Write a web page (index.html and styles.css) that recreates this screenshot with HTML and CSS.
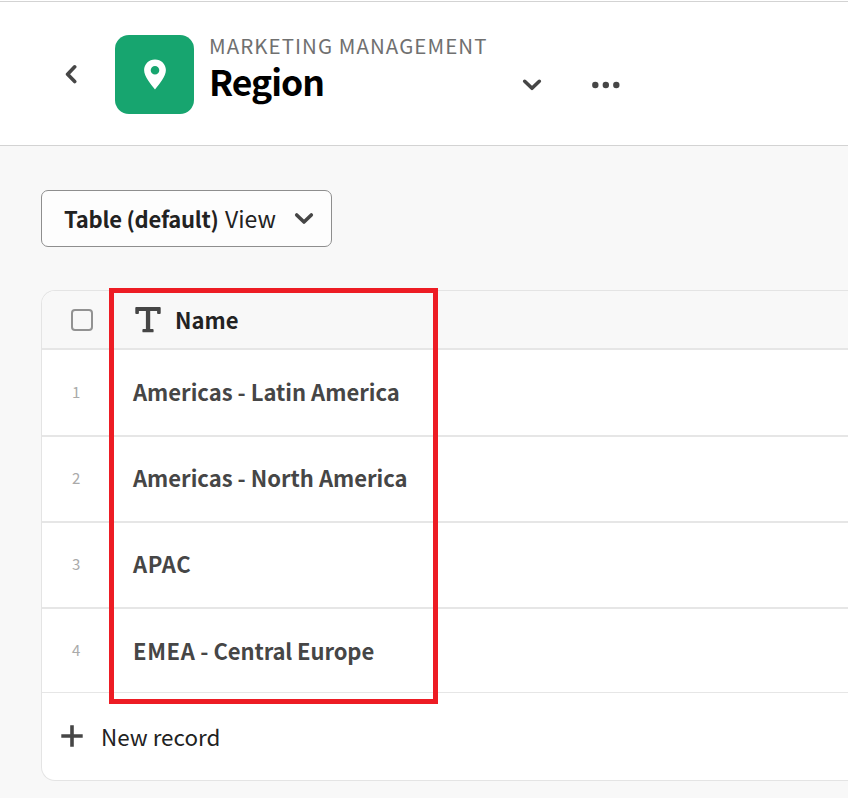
FILE: index.html
```html
<!DOCTYPE html>
<html lang="en">
<head>
<meta charset="utf-8">
<title>Region</title>
<link rel="stylesheet" href="styles.css">
</head>
<body>
<header class="header">
  <svg class="back" viewBox="0 0 14 20" width="14" height="20"><path d="M10.7 2.8 3.6 10.200l7.1 7.300"/></svg>
  <div class="badge">
    <svg viewBox="0 0 22 31" width="22" height="31"><path fill="#fff" fill-rule="evenodd" d="M11 .4C4.900.4.1 5.100.1 11c0 6.500 6.400 13.500 10.900 19.600C15.500 24.500 21.900 17.500 21.900 11 21.900 5.100 17.100.4 11 .4Zm0 6.500a4.300 4.300 0 1 1 0 8.600 4.300 4.300 0 0 1 0-8.600Z"/></svg>
  </div>
  <div class="titles">
    <div class="workspace">MARKETING MANAGEMENT</div>
    <h1 class="title">Region</h1>
  </div>
  <svg class="chevron header-chevron" viewBox="0 0 20 14" width="20" height="14"><path d="M2.700 3.300 10 10.300l7.300-7"/></svg>
  <svg class="more" viewBox="0 0 28 8" width="28" height="8"><circle cx="3.300" cy="4" r="3.200"/><circle cx="13.800" cy="4" r="3.200"/><circle cx="24.300" cy="4" r="3.200"/></svg>
</header>
<main class="content">
  <div class="view-picker"><span class="view-name">Table (default)</span><span class="view-word">View</span><svg class="chevron" viewBox="0 0 20 14" width="20" height="14"><path d="M2.700 3 10 10l7.300-7"/></svg></div>
  <section class="table">
    <div class="row head">
      <div class="index"><span class="checkbox"></span></div>
      <svg class="type" viewBox="0 0 26 26" width="26" height="26"><path d="M1.200 0h23.600q.9 0 .9.900v5.200q0 .9-.9.900h-1.800q-.9 0-.9-.9V4H15.200v18h2.500q.9 0 .9.900v1.500q0 .9-.9.900H8.300q-.9 0-.9-.9v-1.500q0-.9.900-.9H10.900V4H3.900v2.100q0 .9-.9.900H1.200q-.9 0-.9-.9V.9q0-.9.900-.9Z"/></svg>
      <div class="column-name">Name</div>
    </div>
    <div class="row first"><div class="index">1</div><div class="name">Americas - Latin America</div></div>
    <div class="row"><div class="index">2</div><div class="name">Americas - North America</div></div>
    <div class="row"><div class="index">3</div><div class="name"><span class="caps">APAC</span></div></div>
    <div class="row last"><div class="index">4</div><div class="name"><span class="caps">EMEA</span> - <span class="region">Central Europe</span></div></div>
    <div class="new-record">
      <svg viewBox="0 0 22 22" width="22" height="22"><path d="M11 .3v21.400M.3 11h21.400"/></svg>
      <span>New record</span>
    </div>
    <div class="highlight"></div>
  </section>
</main>
</body>
</html>
```
FILE: styles.css
```css
* { box-sizing: border-box; }

body {
  margin: 0;
  height: 798px;
  overflow: hidden;
  background: #f8f8f8;
  color: #222;
  font-family: "Noto Sans CJK SC", "Open Sans", sans-serif;
  font-size: 22px;
}

svg { display: block; flex: none; }

.header {
  display: flex;
  align-items: flex-start;
  height: 146px;
  padding-left: 64px;
  background: #fff;
  border-top: 1px solid #fff;
  border-bottom: 1px solid #d3d3d3;
  box-shadow: inset 0 1px #d3d3d3;
}

.back { margin-top: 63px; }

.back path, .chevron path, .new-record path {
  fill: none;
  stroke: #464646;
  stroke-width: 3.6;
  stroke-linecap: round;
  stroke-linejoin: round;
}

.badge {
  display: grid;
  place-items: center;
  width: 79px;
  height: 79px;
  margin: 34px 0 0 37px;
  border-radius: 14px;
  background: #17a56f;
}

.titles { width: 314px; margin: 30px 0 0 15px; white-space: nowrap; }

.workspace { font-size: 20.500px; line-height: 29px; color: #707070; letter-spacing: 1.050px; }

.title { margin: 0; font-size: 35.500px; line-height: 41px; font-weight: 700; color: #000; letter-spacing: -1px; }

.header-chevron { margin-top: 77px; margin-left: -1px; }

.more { margin: 80px 0 0 50px; fill: #464646; }

.content { padding: 44px 0 0 41px; }

.view-picker {
  display: flex;
  align-items: center;
  width: 291px;
  height: 57px;
  padding-left: 22px;
  border: 1px solid #8e8e8e;
  border-radius: 7px;
  background: #fdfdfd;
  white-space: nowrap;
}

.view-name { width: 161px; padding-bottom: 2px; font-weight: 700; letter-spacing: -.25px; }
.view-word { width: 69px; padding-bottom: 2px; font-size: 23px; }

.table {
  position: relative;
  height: 491px;
  margin-top: 43px;
  border: 1px solid #e4e4e4;
  border-right: 0;
  border-radius: 14px 0 0 14px;
  background: #fff;
}

.row {
  display: flex;
  align-items: center;
  height: 86.200px;
  border-bottom: 2px solid #e6e6e6;
  white-space: nowrap;
}

.row.head { height: 59px; background: #f8f8f8; border-radius: 13px 0 0; }
.row.first { height: 87px; }
.row.last { height: 83.600px; border-bottom-width: 1px; }

.index { width: 91px; padding: 0 0 3px 30px; font-size: 15px; color: #aaa; }
.head .index { padding-bottom: 0; }

.checkbox {
  display: block;
  width: 22px;
  height: 22px;
  margin-left: -1px;
  border: 2px solid #929292;
  border-radius: 4px;
}

.type { margin-left: 2px; fill: #464646; }

.column-name { margin-left: 14px; padding-bottom: 2px; font-weight: 700; }

.name { padding-bottom: 4px; font-weight: 700; color: #464646; }
.last .name { padding-bottom: 2px; }
.caps { letter-spacing: .6px; }
.region { letter-spacing: -.1px; }

.new-record {
  display: flex;
  align-items: center;
  gap: 18px;
  height: 87px;
  padding-left: 19px;
  font-size: 22.400px;
}

.new-record path { stroke-linecap: butt; stroke-width: 3.6; }

.highlight {
  position: absolute;
  top: -3px;
  left: 67px;
  width: 329px;
  height: 416px;
  border: 5px solid #ed1c24;
}
```
